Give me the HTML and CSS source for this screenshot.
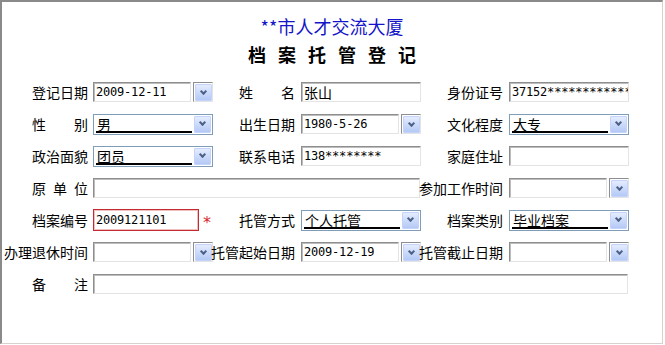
FILE: index.html
```html
<!DOCTYPE html>
<html lang="zh-CN">
<head>
    <meta charset="UTF-8">
    <meta name="viewport" content="width=device-width, initial-scale=1.0">
    <title>档案托管登记</title>
    <link rel="stylesheet" href="styles.css">
</head>
<body>
    <div class="frame">
        <div class="head">
            <div class="org">**市人才交流大厦</div>
            <div class="title">档案托管登记</div>
        </div>
        <div class="form">
            <!-- row 1 -->
            <div class="lb c1">登记日期</div>
            <div class="date"><input class="txt" value="2009-12-11"><span class="dbtn"><span class="arr"></span></span></div>
            <div class="lb"><span class="w4">姓 名</span></div>
            <div><input class="txt cn" value="张山"></div>
            <div class="lb">身份证号</div>
            <div><input class="txt" value="37152***************"></div>

            <!-- row 2 -->
            <div class="lb c1"><span class="w4">性 别</span></div>
            <div class="combo"><span class="val">男</span><span class="arr"></span></div>
            <div class="lb">出生日期</div>
            <div class="date"><input class="txt" value="1980-5-26"><span class="dbtn"><span class="arr"></span></span></div>
            <div class="lb">文化程度</div>
            <div class="combo"><span class="val">大专</span><span class="arr"></span></div>

            <!-- row 3 -->
            <div class="lb c1">政治面貌</div>
            <div class="combo"><span class="val">团员</span><span class="arr"></span></div>
            <div class="lb">联系电话</div>
            <div><input class="txt" value="138********"></div>
            <div class="lb">家庭住址</div>
            <div><input class="txt" value=""></div>

            <!-- row 4 -->
            <div class="lb c1"><span class="w4">原 单 位</span></div>
            <div class="span3"><input class="txt" value=""></div>
            <div class="lb">参加工作时间</div>
            <div class="date"><input class="txt" value=""><span class="dbtn"><span class="arr"></span></span></div>

            <!-- row 5 -->
            <div class="lb c1">档案编号</div>
            <div class="req-cell"><input class="txt req" value="2009121101"><span class="star">*</span></div>
            <div class="lb">托管方式</div>
            <div class="combo"><span class="val">个人托管</span><span class="arr"></span></div>
            <div class="lb">档案类别</div>
            <div class="combo"><span class="val">毕业档案</span><span class="arr"></span></div>

            <!-- row 6 -->
            <div class="lb c1">办理退休时间</div>
            <div class="date"><input class="txt" value=""><span class="dbtn"><span class="arr"></span></span></div>
            <div class="lb">托管起始日期</div>
            <div class="date"><input class="txt" value="2009-12-19"><span class="dbtn"><span class="arr"></span></span></div>
            <div class="lb">托管截止日期</div>
            <div class="date"><input class="txt" value=""><span class="dbtn"><span class="arr"></span></span></div>

            <!-- row 7 -->
            <div class="lb c1"><span class="w4">备 注</span></div>
            <div class="span5"><input class="txt" value=""></div>
        </div>
    </div>
</body>
</html>
```

FILE: styles.css
```css
body, html{
    margin: 0;
    background: #fff;
}
body{
    font-family: "Noto Sans CJK SC", sans-serif;
    font-size: 14px;
    color: #000;
}
.frame{
    width: 663px;
    height: 344px;
    box-sizing: border-box;
    border-top: 2px solid #8a8a8a;
    border-left: 2px solid #8a8a8a;
    border-right: 1px solid #d6d3ce;
    border-bottom: 1px solid #d6d3ce;
}
.head{
    text-align: center;
    padding-top: 12px;
}
.org{
    color: #1414c8;
    font-size: 18px;
    line-height: 24px;
}
.title{
    font-size: 18px;
    font-weight: bold;
    line-height: 24px;
    letter-spacing: 12px;
    padding-left: 12px;
    margin-top: 4px;
}
.form{
    display: grid;
    grid-template-columns: 91px 120px 88px 120px 88px 120px;
    grid-auto-rows: 32px;
    align-items: center;
    margin-top: 10px;
}
.lb{
    display: flex;
    justify-content: flex-end;
    padding-right: 6px;
    white-space: nowrap;
    line-height: 20px;
}
.lb.c1{
    padding-right: 5px;
}
.w4{
    display: inline-block;
    width: 56px;
    text-align: justify;
    text-align-last: justify;
}
.span3{
    grid-column: span 3;
    padding-right: 1px;
}
.span5{
    grid-column: span 5;
    padding-right: 1px;
}

/* text fields */
.txt{
    display: block;
    box-sizing: border-box;
    width: 100%;
    height: 20px;
    margin: 0;
    padding: 0 0 0 2px;
    border: 1px solid;
    border-color: #8e8e8e #e4e4e4 #e4e4e4 #8e8e8e;
    box-shadow: inset 1px 1px 0 #bdbdbd;
    background: #fff;
    font-family: "DejaVu Sans Mono", monospace;
    font-size: 12px;
    letter-spacing: -0.2px;
    color: #000;
    outline: none;
}
.txt.cn{
    font-family: "Noto Sans CJK SC", sans-serif;
    font-size: 14px;
    letter-spacing: 0;
}
.req-cell{
    display: flex;
    align-items: center;
}
.txt.req{
    width: 106px;
    height: 22px;
    border: 1px solid #c42b30;
    box-shadow: inset 0 0 0 1px #eec0c0;
}
.star{
    color: #d8282c;
    margin-left: 4px;
    padding-top: 6px;
    font-family: "DejaVu Sans", sans-serif;
    font-size: 16px;
    line-height: 16px;
}

/* date picker */
.date{
    display: flex;
    gap: 2px;
}
.date .txt{
    width: 98px;
}
.dbtn{
    box-sizing: border-box;
    width: 20px;
    height: 20px;
    padding: 1px 0 0 1px;
    border: 1px solid;
    border-color: #8e8e8e #e4e4e4 #e4e4e4 #8e8e8e;
}

/* combo box */
.combo{
    box-sizing: border-box;
    height: 21px;
    display: flex;
    padding: 1px;
    border: 1px solid #7f9db9;
    background: #fff;
}
.combo .val{
    flex: 1;
    height: 17px;
    box-sizing: border-box;
    margin: 0 2px 0 1px;
    padding-left: 1px;
    border-bottom: 2px solid #000;
    line-height: 16px;
    white-space: nowrap;
}

/* xp style arrow button */
.arr{
    flex: none;
    box-sizing: border-box;
    width: 17px;
    height: 17px;
    display: flex;
    align-items: center;
    justify-content: center;
    border: 1px solid #c3d3fb;
    border-radius: 1px;
    background: linear-gradient(#e4ecfe, #b4c9f6);
}
.arr::after{
    content: "";
    width: 3px;
    height: 3px;
    margin-top: -3px;
    border-right: 2px solid #4d6185;
    border-bottom: 2px solid #4d6185;
    transform: rotate(45deg);
}
```
